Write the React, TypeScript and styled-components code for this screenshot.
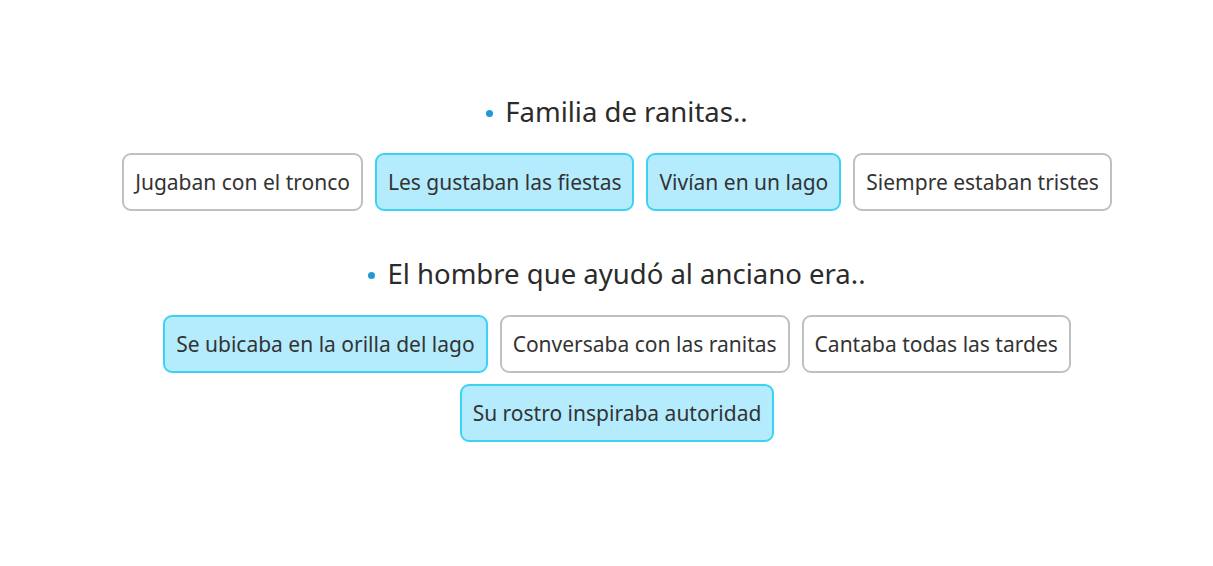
import React from "react";
import styled, { createGlobalStyle } from "styled-components";

const Global = createGlobalStyle`
  html, body { margin: 0; padding: 0; background: #ffffff; }
  body { font-family: "Noto Sans", "Open Sans", sans-serif; color: #333333; }
`;

const Page = styled.div`
  display: flex;
  flex-direction: column;
  align-items: center;
  padding: 94px 0 0 21px;
`;

const Question = styled.section`
  display: flex;
  flex-direction: column;
  align-items: center;
  width: 1060px;
  margin-bottom: 45px;
`;

const Title = styled.h2`
  margin: 0 0 23px 0;
  font-size: 27.5px;
  line-height: 36px;
  font-weight: 400;
  color: #2b2b2b;
  display: flex;
  align-items: center;
  gap: 12px;
`;

const Dot = styled.span`
  width: 7px;
  height: 7px;
  border-radius: 50%;
  background: #1e9ad6;
  display: inline-block;
  margin-top: 2px;
`;

const Options = styled.div`
  display: flex;
  flex-wrap: wrap;
  justify-content: center;
  gap: 11px 12px;
`;

const Option = styled.button<{ $selected?: boolean }>`
  font-family: inherit;
  font-size: 21px;
  line-height: 26px;
  color: #333333;
  padding: 14px 11px;
  border-radius: 9px;
  border: 2px solid ${(p) => (p.$selected ? "#3cd2f4" : "#c0c0c0")};
  background: ${(p) => (p.$selected ? "#b4ecfe" : "#ffffff")};
  cursor: pointer;
`;

const questions = [
  {
    title: "Familia de ranitas..",
    options: [
      { text: "Jugaban con el tronco", selected: false },
      { text: "Les gustaban las fiestas", selected: true },
      { text: "Vivían en un lago", selected: true },
      { text: "Siempre estaban tristes", selected: false },
    ],
  },
  {
    title: "El hombre que ayudó al anciano era..",
    options: [
      { text: "Se ubicaba en la orilla del lago", selected: true },
      { text: "Conversaba con las ranitas", selected: false },
      { text: "Cantaba todas las tardes", selected: false },
      { text: "Su rostro inspiraba autoridad", selected: true },
    ],
  },
];

export default function App() {
  return (
    <>
      <Global />
      <Page>
        {questions.map((q) => (
          <Question key={q.title}>
            <Title>
              <Dot />
              {q.title}
            </Title>
            <Options>
              {q.options.map((o) => (
                <Option key={o.text} $selected={o.selected}>
                  {o.text}
                </Option>
              ))}
            </Options>
          </Question>
        ))}
      </Page>
    </>
  );
}
